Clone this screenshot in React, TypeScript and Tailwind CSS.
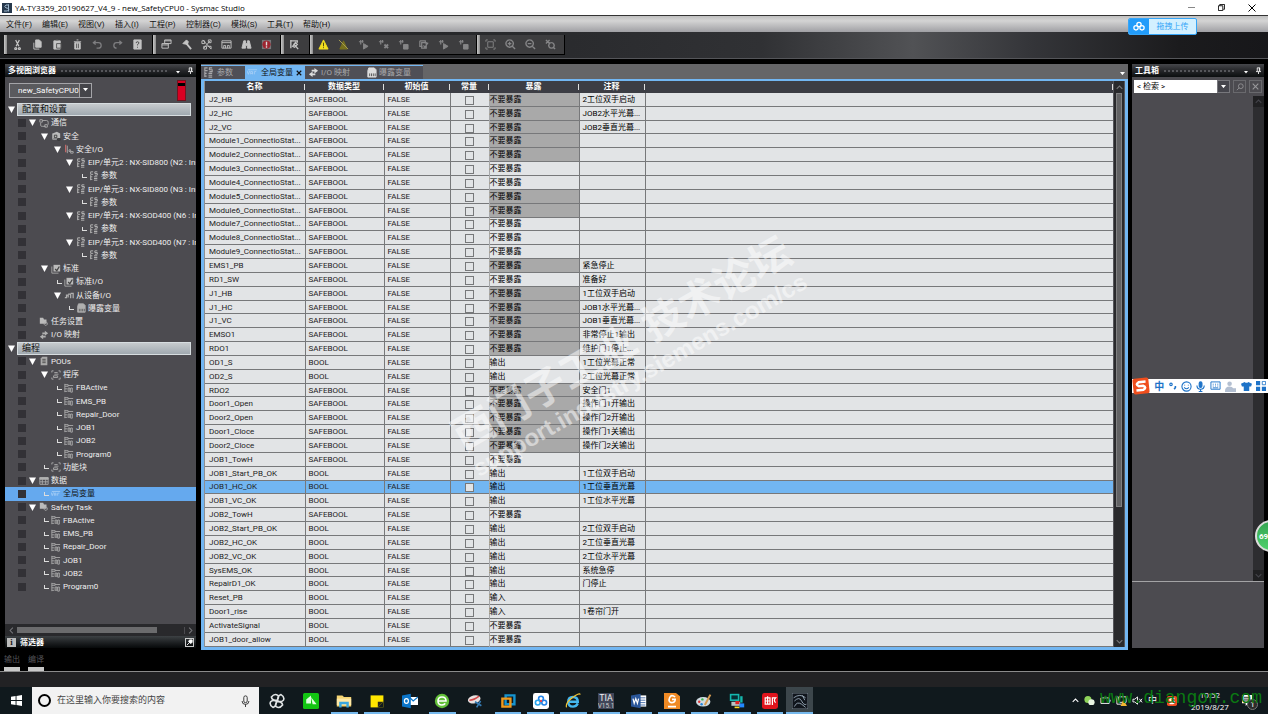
import { useState } from 'react';
import type { ReactNode } from 'react';

interface TreeNode {
  level: number;
  label: string;
  icon?: string;
  open?: boolean;
}

interface Variable {
  name: string;
  type: string;
  expose: string;
  shaded?: boolean;
  comment?: string;
}

const tree: TreeNode[] = [
  { level: 0, label: '配置和设置', open: true },
  { level: 1, label: '通信', icon: 'net', open: true },
  { level: 2, label: '安全', icon: 'safety', open: true },
  { level: 3, label: '安全I/O', icon: 'safeio', open: true },
  { level: 4, label: 'EIP/单元2 : NX-SID800 (N2 : Instance0)', icon: 'param', open: true },
  { level: 5, label: '参数', icon: 'param' },
  { level: 4, label: 'EIP/单元3 : NX-SID800 (N3 : Instance0)', icon: 'param', open: true },
  { level: 5, label: '参数', icon: 'param' },
  { level: 4, label: 'EIP/单元4 : NX-SOD400 (N6 : Instance0)', icon: 'param', open: true },
  { level: 5, label: '参数', icon: 'param' },
  { level: 4, label: 'EIP/单元5 : NX-SOD400 (N7 : Instance0)', icon: 'param', open: true },
  { level: 5, label: '参数', icon: 'param' },
  { level: 2, label: '标准', icon: 'standard', open: true },
  { level: 3, label: '标准I/O', icon: 'standard' },
  { level: 3, label: '从设备I/O', icon: 'slave', open: true },
  { level: 4, label: '曝露变量', icon: 'exposed' },
  { level: 1, label: '任务设置', icon: 'task' },
  { level: 1, label: 'I/O 映射', icon: 'map' },
  { level: 0, label: '编程', open: true },
  { level: 1, label: 'POUs', icon: 'pou', open: true },
  { level: 2, label: '程序', icon: 'program', open: true },
  { level: 3, label: 'FBActive', icon: 'ladder' },
  { level: 3, label: 'EMS_PB', icon: 'ladder' },
  { level: 3, label: 'Repair_Door', icon: 'ladder' },
  { level: 3, label: 'JOB1', icon: 'ladder' },
  { level: 3, label: 'JOB2', icon: 'ladder' },
  { level: 3, label: 'Program0', icon: 'ladder' },
  { level: 2, label: '功能块', icon: 'program' },
  { level: 1, label: '数据', icon: 'data', open: true },
  { level: 2, label: '全局变量', icon: 'var' },
  { level: 1, label: 'Safety Task', icon: 'task', open: true },
  { level: 2, label: 'FBActive', icon: 'ladder' },
  { level: 2, label: 'EMS_PB', icon: 'ladder' },
  { level: 2, label: 'Repair_Door', icon: 'ladder' },
  { level: 2, label: 'JOB1', icon: 'ladder' },
  { level: 2, label: 'JOB2', icon: 'ladder' },
  { level: 2, label: 'Program0', icon: 'ladder' },
];

const indent = ['', 'pl-[2px]', 'pl-[14px]', 'pl-[27px]', 'pl-[39px]', 'pl-[52px]'];

const variables: Variable[] = [
  { name: 'J2_HB', type: 'SAFEBOOL', expose: '不要暴露', shaded: true, comment: '2工位双手启动' },
  { name: 'J2_HC', type: 'SAFEBOOL', expose: '不要暴露', shaded: true, comment: 'JOB2水平光幕...' },
  { name: 'J2_VC', type: 'SAFEBOOL', expose: '不要暴露', shaded: true, comment: 'JOB2垂直光幕...' },
  { name: 'Module1_ConnectioStat...', type: 'SAFEBOOL', expose: '不要暴露', shaded: true },
  { name: 'Module2_ConnectioStat...', type: 'SAFEBOOL', expose: '不要暴露', shaded: true },
  { name: 'Module3_ConnectioStat...', type: 'SAFEBOOL', expose: '不要暴露' },
  { name: 'Module4_ConnectioStat...', type: 'SAFEBOOL', expose: '不要暴露' },
  { name: 'Module5_ConnectioStat...', type: 'SAFEBOOL', expose: '不要暴露', shaded: true },
  { name: 'Module6_ConnectioStat...', type: 'SAFEBOOL', expose: '不要暴露', shaded: true },
  { name: 'Module7_ConnectioStat...', type: 'SAFEBOOL', expose: '不要暴露' },
  { name: 'Module8_ConnectioStat...', type: 'SAFEBOOL', expose: '不要暴露' },
  { name: 'Module9_ConnectioStat...', type: 'SAFEBOOL', expose: '不要暴露' },
  { name: 'EMS1_PB', type: 'SAFEBOOL', expose: '不要暴露', shaded: true, comment: '紧急停止' },
  { name: 'RD1_SW', type: 'SAFEBOOL', expose: '不要暴露', comment: '准备好' },
  { name: 'J1_HB', type: 'SAFEBOOL', expose: '不要暴露', shaded: true, comment: '1工位双手启动' },
  { name: 'J1_HC', type: 'SAFEBOOL', expose: '不要暴露', shaded: true, comment: 'JOB1水平光幕...' },
  { name: 'J1_VC', type: 'SAFEBOOL', expose: '不要暴露', shaded: true, comment: 'JOB1垂直光幕...' },
  { name: 'EMSO1', type: 'SAFEBOOL', expose: '不要暴露', shaded: true, comment: '非常停止1输出' },
  { name: 'RDO1', type: 'SAFEBOOL', expose: '不要暴露', shaded: true, comment: '维护门1停止...' },
  { name: 'OD1_S', type: 'BOOL', expose: '输出', comment: '1工位光幕正常' },
  { name: 'OD2_S', type: 'BOOL', expose: '输出', comment: '2工位光幕正常' },
  { name: 'RDO2', type: 'SAFEBOOL', expose: '不要暴露', shaded: true, comment: '安全门1' },
  { name: 'Door1_Open', type: 'SAFEBOOL', expose: '不要暴露', shaded: true, comment: '操作门1开输出' },
  { name: 'Door2_Open', type: 'SAFEBOOL', expose: '不要暴露', shaded: true, comment: '操作门2开输出' },
  { name: 'Door1_Cloce', type: 'SAFEBOOL', expose: '不要暴露', shaded: true, comment: '操作门1关输出' },
  { name: 'Door2_Cloce', type: 'SAFEBOOL', expose: '不要暴露', shaded: true, comment: '操作门2关输出' },
  { name: 'JOB1_TowH', type: 'SAFEBOOL', expose: '不要暴露' },
  { name: 'JOB1_Start_PB_OK', type: 'BOOL', expose: '输出', comment: '1工位双手启动' },
  { name: 'JOB1_HC_OK', type: 'BOOL', expose: '输出', comment: '1工位垂直光幕' },
  { name: 'JOB1_VC_OK', type: 'BOOL', expose: '输出', comment: '1工位水平光幕' },
  { name: 'JOB2_TowH', type: 'SAFEBOOL', expose: '不要暴露' },
  { name: 'JOB2_Start_PB_OK', type: 'BOOL', expose: '输出', comment: '2工位双手启动' },
  { name: 'JOB2_HC_OK', type: 'BOOL', expose: '输出', comment: '2工位垂直光幕' },
  { name: 'JOB2_VC_OK', type: 'BOOL', expose: '输出', comment: '2工位水平光幕' },
  { name: 'SysEMS_OK', type: 'BOOL', expose: '输出', comment: '系统急停' },
  { name: 'RepairD1_OK', type: 'BOOL', expose: '输出', comment: '门停止' },
  { name: 'Reset_PB', type: 'BOOL', expose: '输入' },
  { name: 'Door1_rise', type: 'BOOL', expose: '输入', comment: '1卷帘门开' },
  { name: 'ActivateSignal', type: 'BOOL', expose: '不要暴露' },
  { name: 'JOB1_door_allow', type: 'BOOL', expose: '不要暴露' },
];

const columns = [
  { title: '名称', width: 'w-[100px]' },
  { title: '数据类型', width: 'w-[79px]' },
  { title: '初始值', width: 'w-[66px]' },
  { title: '常量', width: 'w-[39px]' },
  { title: '暴露', width: 'w-[90px]' },
  { title: '注释', width: 'w-[66px]' },
  { title: '', width: '' },
];

const menus = [
  { label: '文件(F)', width: 'w-[36px]' },
  { label: '编辑(E)', width: 'w-[36px]' },
  { label: '视图(V)', width: 'w-[37px]' },
  { label: '插入(I)', width: 'w-[34px]' },
  { label: '工程(P)', width: 'w-[37px]' },
  { label: '控制器(C)', width: 'w-[45px]' },
  { label: '模拟(S)', width: 'w-[36px]' },
  { label: '工具(T)', width: 'w-[36px]' },
  { label: '帮助(H)', width: 'w-[36px]' },
];

// All glyphs share a 12x12 grid and take the stroke colour of the parent.
const glyphs: Record<string, ReactNode> = {
  cut: <path d="M4 1l3.500 7M8 1L4.500 8M4 9.500a1 1 0 1 0 .1 0M8 9.500a1 1 0 1 0 .1 0" strokeWidth="1.400" />,
  copy: <><path d="M4 1h4l2 2v6H4z" fill="currentColor" /><path d="M2 4v7h6" /></>,
  paste: <><path d="M2 2h7v9H2z" fill="currentColor" /><path d="M4 1h3M5 5h5v5H5z" stroke="#555" /></>,
  trash: <><path d="M3 4h6v7H3z" fill="currentColor" /><path d="M2 3h8M5 1h2" /><path d="M5 5v5M7 5v5" stroke="#555" /></>,
  undo: <path d="M4 2L1.500 4 4 6M2 4h5q3 0 3 3t-3 3H5" strokeWidth="1.400" />,
  redo: <path d="M8 2l2.500 2L8 6M10 4H5Q2 4 2 7t3 3" strokeWidth="1.400" />,
  help: <><path d="M2 1h8v10H2z" fill="currentColor" /><path d="M4.500 4.500q0-1.500 1.500-1.500t1.500 1.300q0 1-1.500 1.700v1M6 8.500v1" stroke="#444" /></>,
  windows: <path d="M4 1h7v4H4zM4 2h7M1 5h7v5H1zM1 6.500h7" />,
  hammer: <><path d="M2 5l4-4 2 2-1 3z" fill="currentColor" /><path d="M6 5l5 6" strokeWidth="2" /></>,
  network: <path d="M1 2h3v3H1zM8 1h3v3H8zM3 8h3v3H3zM2 1l9 10M10 2L3 10M7 8h4v3" />,
  monitor: <path d="M1 2h10v8H1zM1 4h10M3 10V7h2v3M7 10V7h2v3" />,
  binoculars: <path d="M3 2h2v3h2V2h2l2 8H7V7H5v3H1z" fill="currentColor" />,
  stop: <><path d="M1 1h10v10H1z" fill="#77777a" stroke="none" /><circle cx="6" cy="6" r="4.500" fill="#9d2530" stroke="none" /><path d="M6 3v4M6 8v1.500" stroke="#ddd" strokeWidth="1.500" /></>,
  tool: <path d="M2 1v9M2 2h7v2M5 5l5 6M4 8l3-4 2 2-3 3z" strokeWidth="1.500" />,
  warn: <><path d="M6 1l5 10H1z" fill="#f3df20" stroke="#f3df20" /><path d="M6 4v4M6 9v1" stroke="#443f10" /></>,
  nowarn: <><path d="M6 2l4 9H2z" fill="#77701f" stroke="#77701f" /><path d="M1 1l10 10" stroke="#aaa255" /></>,
  play: <><path d="M1 3h5M3 1v5M5 1v3" strokeWidth="1.300" /><path d="M6 5l5 3-5 3z" fill="currentColor" /></>,
  cross: <><path d="M1 3h5M3 1v5M5 1v3" strokeWidth="1.300" /><path d="M7 6l4 4M11 6l-4 4" strokeWidth="2" /></>,
  block: <><path d="M1 3h5M3 1v5M5 1v3" strokeWidth="1.300" /><path d="M6 6h5v5H6z" fill="currentColor" /></>,
  check: <path d="M2 2h6v3M2 2v6h3M4 4h5v6H4zM6 7l1.500 2L11 4" strokeWidth="1.300" />,
  frame: <path d="M3 3h6v6H3zM1 3V1h2M9 1h2v2M11 9v2H9M3 11H1V9" />,
  zoomin: <path d="M5 1a4 4 0 1 0 .1 0M8 8l3 3M3 5h4M5 3v4" strokeWidth="1.500" />,
  zoomout: <path d="M5 1a4 4 0 1 0 .1 0M8 8l3 3M3 5h4" strokeWidth="1.500" />,
  zoomfit: <path d="M1 1l4 4M5 1L1 5M7 4a3 3 0 1 0 .1 0M9 9l2 2" strokeWidth="1.500" />,
  param: <path d="M5 1H2v3h3M10 1H7v2h3v2H7M2 5v6M2 7h2M2 10h2M6 7h4M6 9h4M6 11h4" strokeWidth="1.200" />,
  net: <path d="M1 2h3v3H1zM4 3h5q2 0 2 2v3M2 6v3q0 1 2 1h4M7 8h3v3H7z" />,
  safety: <><path d="M2 3l5-2 4 2v6H2z" fill="#bbb" stroke="none" /><path d="M4 5h3v3H4zM8 9h3v2H8z" stroke="#333" /><path d="M2 3v7h5" /></>,
  standard: <><path d="M3 1h8v8H3z" fill="#bbb" stroke="none" /><path d="M1 3v8h8" /><path d="M5 6l2 2 3-5" stroke="#444" strokeWidth="1.500" /></>,
  safeio: <><path d="M2 1v9" stroke="#c46a6a" strokeWidth="1.500" /><path d="M4 2v9M6 7h2v2H6zM8 9h3v2H8z" /></>,
  slave: <path d="M1 9h2V6h2v3M5 5h3v5M8 4h3v6" strokeWidth="1.500" />,
  exposed: <><path d="M3 1h6l2 2v8H2V4z" fill="currentColor" /><path d="M4 10V7M6 10V7M8 10V7M10 10V7" stroke="#555" /></>,
  task: <><path d="M1 1h4l1 2h3v5H1z" fill="#bbb" stroke="none" /><path d="M8 6a2 2 0 1 0 .1 0" /></>,
  map: <><path d="M7 1l4 3-4 3V5H4V3h3z" fill="currentColor" stroke="none" /><path d="M5 5L1 8l4 3V9h3V7H5z" fill="currentColor" stroke="none" /></>,
  pou: <><path d="M4 1h6v10H2V3z" fill="#aaa" stroke="none" /><path d="M4 4h4M4 6h4M4 8h4" stroke="#444" /></>,
  program: <path d="M1 3V1h2M9 1h2v2M11 9v2H9M3 11H1V9M4 3h4M4 5h5M3 7h5v2H3z" />,
  ladder: <path d="M1 1v10M1 2h4v2H1M5 3h6M1 7h3M5 6h2v4H5zM8 6h2v5H8zM1 10h3" />,
  data: <><path d="M1 2h10v8H1z" /><path d="M1 2h10v2H1z" fill="currentColor" /><path d="M1 7h10M4 4v6M8 4v6" /></>,
  var: <path d="M0 4l1.500 4L3 4M4 8V5h2v3M4 7h2M8 8V5h2M1 3h10" stroke="#a3cdf5" />,
};

function Glyph({ name, className = 'size-[11px]' }: { name: string; className?: string }) {
  return (
    <svg viewBox="0 0 12 12" className={`shrink-0 ${className}`} fill="none" stroke="currentColor" strokeWidth="1" aria-hidden="true">
      {glyphs[name]}
    </svg>
  );
}

function Caret({ className = 'w-[5px]' }: { className?: string }) {
  return (
    <svg viewBox="0 0 8 5" className={`shrink-0 ${className}`} fill="currentColor" aria-hidden="true">
      <path d="M0 0h8L4 5z" />
    </svg>
  );
}

function TreeArrow() {
  return (
    <svg viewBox="0 0 7 7" className="size-[7px] shrink-0 text-white" fill="currentColor" aria-hidden="true">
      <path d="M0 .5h7L3.500 7z" />
    </svg>
  );
}

function Chevron({ path }: { path: string }) {
  return (
    <svg viewBox="0 0 10 10" className="size-[7px]" fill="none" stroke="currentColor" strokeWidth="1.500" aria-hidden="true">
      <path d={path} />
    </svg>
  );
}

const toolGroups = [
  { width: 'w-[149px]', dim: false, icons: ['cut', 'copy', 'paste', 'trash', 'undo', 'redo', 'help'] },
  { width: 'w-[128px]', dim: false, icons: ['windows', 'hammer', 'network', 'monitor', 'binoculars', 'stop'] },
  { width: 'w-[29px]', dim: false, icons: ['tool'] },
  { width: 'w-[167px]', dim: true, icons: ['warn', 'nowarn', 'play', 'cross', 'block', 'check', 'play', 'block'] },
  { width: 'w-[88px]', dim: true, icons: ['frame', 'zoomin', 'zoomout', 'zoomfit'] },
];

function Toolbar() {
  return (
    <div className="flex h-[27px] items-center border-b border-[#55565a] bg-[linear-gradient(90deg,#1b1c1e_0%,#2a2b2e_45%,#303134_60%,#515255_72%,#35363a_81%,#1b1b1d_93%,#17171a_100%)] pl-1">
      {toolGroups.map((group, i) => (
        <div key={i} className={`flex h-[20px] border-r border-b border-black bg-[#3d3d3f] ${group.width}`}>
          <span className="w-[3px] bg-gradient-to-r from-[#c9c9c9] to-[#8b8b8b]" />
          {group.icons.map((icon, j) => (
            <button
              key={j}
              aria-label={icon}
              className={`flex w-5 items-center justify-center ${group.dim ? 'text-[#858587]' : icon === 'undo' || icon === 'redo' ? 'text-[#7e7e80]' : 'text-[#c4c4c4]'}`}
            >
              <Glyph name={icon} />
            </button>
          ))}
        </div>
      ))}
    </div>
  );
}

function PanelHeader({ title }: { title: string }) {
  return (
    <div className="flex h-[13px] shrink-0 items-center gap-1 bg-gradient-to-b from-[#46474b] via-[#26272a] to-[#0b0e0f] px-[3px] text-white">
      <h2 className="font-bold">{title}</h2>
      <span className="h-[4px] flex-1 bg-[radial-gradient(#55565a_1px,transparent_1px)] bg-[size:4px_4px]" />
      <button aria-label="菜单" className="mt-1 flex w-3 justify-center"><Caret className="w-[4px]" /></button>
      <button aria-label="固定">
        <svg viewBox="0 0 6 9" className="w-[5px]" fill="none" stroke="currentColor" aria-hidden="true">
          <path d="M1.500 5V1h3v4M0 5.500h6M3 6v3M4 1v4" />
        </svg>
      </button>
    </div>
  );
}

function Explorer() {
  const [selected, setSelected] = useState(29);

  return (
    <aside className="mb-[2px] flex w-[191px] shrink-0 flex-col bg-[#4c4b50]">
      <PanelHeader title="多视图浏览器" />
      <div className="flex h-[26px] shrink-0 items-center justify-between pr-[10px] pl-1">
        <div className="flex h-[15px] w-[83px] items-stretch border border-[#a4a4a8] bg-[#5a5a5e] text-white">
          <select aria-label="控制器" className="min-w-0 flex-1 appearance-none pl-[8px] text-[8px] outline-none">
            <option>new_SafetyCPU0</option>
          </select>
          <span className="pointer-events-none flex w-[12px] items-center justify-center border-l border-[#a4a4a8] bg-[#45454a]">
            <Caret />
          </span>
        </div>
        <span className="flex h-[21px] w-[9px] flex-col border border-[#6f1520] bg-[#d70022] pt-[2px]">
          <span className="h-[3px] bg-black" />
        </span>
      </div>
      <ul className="flex flex-1 flex-col overflow-hidden pb-[31px] text-[#eeeeee]">
        {tree.map((node, i) => {
          if (node.level === 0) {
            return (
              <li key={i} className="flex min-h-0 flex-1 items-center gap-[2px] pr-[5px] pl-[3px]">
                <TreeArrow />
                <button className="flex h-[13px] flex-1 items-center border border-[#d7dde0] bg-gradient-to-b from-[#c6cacd] to-[#a0a9b0] pl-1 text-[9px] text-[#111111]">
                  {node.label}
                </button>
              </li>
            );
          }
          return (
            <li key={i} className={`flex min-h-0 flex-1 items-center pl-[13px] ${selected === i ? 'bg-[#65a9ee] text-[#111111]' : ''}`}>
              <span className="size-[8px] shrink-0 bg-[#323136]" />
              <button onClick={() => setSelected(i)} className={`flex min-w-0 flex-1 items-center whitespace-nowrap ${indent[node.level]}`}>
                <span className="flex w-[9px] shrink-0 justify-center">
                  {node.open ? (
                    <TreeArrow />
                  ) : (
                    node.level > 1 && <span className="ml-[3px] h-[4px] w-[5px] border-b border-l border-[#dddddd]" />
                  )}
                </span>
                <span className="mr-[2px] ml-[2px] text-[#b0b0b0]"><Glyph name={node.icon ?? 'param'} className="size-[10px]" /></span>
                {node.label}
              </button>
            </li>
          );
        })}
      </ul>
      <div className="flex h-[12px] shrink-0 items-center bg-[#29292c] text-[#77777a]">
        <button aria-label="向左" className="flex w-[12px] justify-center"><Chevron path="M7 1L3 5l4 4" /></button>
        <span className="flex-1 pr-[27px]"><span className="block h-[6px] bg-[#6b6b6d]" /></span>
        <button aria-label="向右" className="flex w-[12px] justify-center border-l border-[#4c4b50]"><Chevron path="M3 1l4 4-4 4" /></button>
      </div>
      <div className="flex h-[12px] shrink-0 items-center bg-gradient-to-b from-[#3d4144] to-[#07090a] px-[2px] font-bold text-white">
        <span className="mr-1 flex h-[9px] w-[9px] items-center justify-center bg-[#bcbcbc] font-serif text-[#111111]">i</span>
        筛选器
        <button aria-label="展开筛选器" className="ml-auto flex size-[9px] items-center justify-center border border-[#cccccc]">
          <svg viewBox="0 0 8 8" className="size-[7px]" fill="currentColor" stroke="currentColor" aria-hidden="true">
            <path d="M4 1h3v3L5 5 3 3z" /><path d="M1 7l3-3" />
          </svg>
        </button>
      </div>
    </aside>
  );
}

function Editor() {
  const [active, setActive] = useState(28);

  return (
    <main className="flex min-w-0 flex-1 flex-col bg-[#656567] pt-px">
      <div className="flex h-[14px] shrink-0 items-stretch text-[#a9a9ab]">
        <div className="flex border-t border-[#72b6f2] bg-[#4f4f56]">
          <button className="flex w-[44px] items-center gap-[3px] pl-[2px]"><Glyph name="param" />参数</button>
          <div className="flex w-[60px] items-center bg-[#72b6f2] text-[#111111]">
            <button className="flex items-center gap-[3px] pl-[2px]"><Glyph name="var" />全局变量</button>
            <button aria-label="关闭" className="ml-[3px]">
              <svg viewBox="0 0 8 8" className="size-[6px]" stroke="currentColor" strokeWidth="1.500" aria-hidden="true"><path d="M1 1l6 6M7 1L1 7" /></svg>
            </button>
          </div>
          <button className="flex w-[59px] items-center gap-[2px] pl-[3px]"><span className="text-[#dddddd]"><Glyph name="map" /></span>I/O 映射</button>
          <button className="flex w-[59px] items-center gap-[2px] pl-[2px]"><span className="text-[#dddddd]"><Glyph name="exposed" /></span>曝露变量</button>
        </div>
        <button aria-label="标签列表" className="mt-auto mr-[3px] mb-[4px] ml-auto text-white"><Caret /></button>
      </div>
      <div className="flex min-h-0 flex-1 border-[3px] border-t-2 border-[#72b6f2] bg-[#8f9092] pl-px">
        <table className="h-full flex-1 table-fixed border-collapse bg-[#e2e4e6] text-[#222222]">
          <thead>
            <tr className="h-[12px] bg-[#3c3d44] leading-[10px] text-white">
              {columns.map((col, i) => (
                <th key={i} className={`p-0 font-bold ${col.width}`}>
                  <span className="flex items-center">
                    <span className="flex-1 text-center">{col.title}</span>
                    <span className="h-[6px] w-px bg-[#dddddd]" />
                  </span>
                </th>
              ))}
            </tr>
          </thead>
          <tbody>
            {variables.map((row, i) => (
              <tr
                key={row.name}
                onClick={() => setActive(i)}
                className={`border-b border-[#77787a] ${active === i ? 'bg-[#72b6f2]' : ''}`}
              >
                <td className="border-r border-[#77787a] p-0 pl-1 whitespace-nowrap">{row.name}</td>
                <td className="border-r border-[#77787a] p-0 pl-[3px]">{row.type}</td>
                <td className="border-r border-[#77787a] p-0 pl-[3px]">FALSE</td>
                <td className="border-r border-[#a7a8aa] p-0">
                  <input type="checkbox" aria-label={`${row.name} 常量`} className="mx-auto mt-[2px] block size-[9px] appearance-none border border-[#77787a] bg-[#e2e4e6]" />
                </td>
                <td className={`border-r border-[#77787a] p-0 text-[#000000] ${row.shaded ? 'bg-[#a9a9a9]' : ''}`}>{row.expose}</td>
                <td className="border-r border-[#77787a] p-0 pl-[3px] whitespace-nowrap text-[#000000]">{row.comment}</td>
                <td className="p-0" />
              </tr>
            ))}
          </tbody>
        </table>
        <div className="flex w-[12px] shrink-0 flex-col items-center border-x border-[#55555a] bg-[#29292c] text-[#77777a]">
          <button aria-label="向上" className="flex h-[12px] items-center"><Chevron path="M1 7l4-4 4 4" /></button>
          <span className="w-[6px] flex-[412] border border-[#808082] bg-[#626264]" />
          <span className="flex-[128]" />
          <button aria-label="向下" className="flex h-[12px] items-center"><Chevron path="M1 3l4 4 4-4" /></button>
        </div>
      </div>
    </main>
  );
}

function Toolbox() {
  return (
    <aside className="mb-[2px] flex w-[132px] shrink-0 flex-col bg-[#4c4b50]">
      <PanelHeader title="工具箱" />
      <div className="flex h-[19px] shrink-0 items-center gap-[3px] px-[2px] text-[#99999c]">
        <div className="flex h-[13px] flex-1">
          <input aria-label="检索" defaultValue="< 检索 >" className="w-full min-w-0 bg-white pl-[3px] text-[8px] text-black outline-none" />
          <button aria-label="检索历史" className="flex w-[13px] shrink-0 items-center justify-center border border-[#77777c] bg-[#45454c] text-white"><Caret /></button>
        </div>
        <button aria-label="搜索" className="flex h-[13px] w-[13px] items-center justify-center border border-[#69696d]">
          <svg viewBox="0 0 10 10" className="size-[8px]" fill="none" stroke="currentColor" aria-hidden="true"><circle cx="6" cy="4" r="3" /><path d="M4 6L1 9" /></svg>
        </button>
        <button aria-label="清除" className="flex h-[13px] w-[13px] items-center justify-center border border-[#69696d]">
          <Chevron path="M1 1l8 8M9 1L1 9" />
        </button>
      </div>
      <div className="flex flex-1 justify-end border-b border-[#a3a3a5]">
        <div className="flex w-[11px] flex-col items-center justify-between bg-[#2d2d30] text-[#44444a]">
          <button aria-label="向上" className="flex h-[11px] w-full items-center justify-center bg-[#202022]"><Chevron path="M1 7l4-4 4 4" /></button>
          <button aria-label="向下" className="flex h-[11px] w-full items-center justify-center bg-[#202022]"><Chevron path="M1 3l4 4 4-4" /></button>
        </div>
      </div>
      <div className="h-[66px] shrink-0" />
    </aside>
  );
}

// Taskbar application icons, 20x20 grid.
const apps: { name: string; running: boolean; art: ReactNode }[] = [
  { name: '视频', running: false, art: <><rect x="0" y="0" width="20" height="20" rx="2" fill="#12c512" /><path d="M4 13V8l6-5v10zM10 5l7 9h-5z" fill="#dfffdf" /></> },
  { name: '文件资源管理器', running: true, art: <><path d="M1 3h7l2 2h9v12H1z" fill="#f6d573" /><path d="M1 7h18v8H1z" fill="#ffe9a6" /><path d="M4 18v-7h12v7h-3v-4H7v4z" fill="#39a7df" /></> },
  { name: '便笺', running: true, art: <><path d="M2 3h16v15H2z" fill="#ffe600" /><path d="M11 11h7l-7 7z" fill="#26261c" /><path d="M18 11v7h-7z" fill="#10191d" /></> },
  { name: 'Outlook', running: false, art: <><path d="M9 5h11v10H9z" fill="#fff" /><path d="M9 5l5 5 6-5" stroke="#0b75c9" strokeWidth="1.500" fill="none" /><path d="M0 3l11-2v18L0 17z" fill="#0b75c9" /><ellipse cx="5.500" cy="10" rx="2.500" ry="3" fill="none" stroke="#fff" strokeWidth="1.500" /></> },
  { name: '360浏览器', running: true, art: <><circle cx="10" cy="10" r="9" fill="#62bf39" /><path d="M5 10h10q0-5-5-5t-5 5 5 5q3 0 4-2" fill="none" stroke="#fff" strokeWidth="2" /></> },
  { name: '截图工具', running: false, art: <><ellipse cx="9" cy="8" rx="8" ry="5" fill="#e8e0df" transform="rotate(-15 9 8)" /><path d="M3 9q6 0 12-5" stroke="#d34a4a" strokeWidth="2" fill="none" /><path d="M10 11l8 5M17 10l-5 8" stroke="#367ab2" strokeWidth="2" /></> },
  { name: '虚拟机', running: true, art: <g fill="none" strokeWidth="3"><path d="M7 3h11v11H7z" stroke="#1694cf" /><path d="M3 7h10v10H3z" stroke="#f19a1c" /></g> },
  { name: '网盘', running: true, art: <><rect x="0" y="0" width="20" height="20" rx="3" fill="#fff" /><g fill="none" strokeWidth="2"><circle cx="10" cy="7" r="3" stroke="#2384e8" /><circle cx="6" cy="12" r="3" stroke="#2aa6ee" /><circle cx="14" cy="12" r="3" stroke="#2384e8" /></g><circle cx="10" cy="10" r="1.500" fill="#e44a5b" /></> },
  { name: 'Internet Explorer', running: true, art: <><path d="M5 11h11q0-6-6-6t-6 6 6 6q4 0 6-4" fill="none" stroke="#45b7ee" strokeWidth="3" /><path d="M2 18Q0 13 9 6t10-4" fill="none" stroke="#f4c431" strokeWidth="1.500" /></> },
  { name: 'TIA', running: true, art: <><rect x="0" y="0" width="20" height="20" fill="#404659" /><text x="10" y="10" textAnchor="middle" fontSize="11" fill="#eee">TIA</text><text x="10" y="19" textAnchor="middle" fontSize="8" fill="#ccc">V15.1</text></> },
  { name: 'Word', running: true, art: <><path d="M10 3h9v14h-9z" fill="#fff" /><path d="M11 6h7M11 9h7M11 12h7M11 15h7" stroke="#2a5699" /><path d="M0 3l12-2v18L0 17z" fill="#2a5699" /><path d="M2.500 7L4 13l2-6 2 6 1.500-6" stroke="#fff" fill="none" strokeWidth="1.500" /></> },
  { name: 'PDF', running: true, art: <><path d="M0 0h15l5 4v16H0z" fill="#f08a24" /><path d="M14 5q-5-4-7 1t2 6q5 0 5-4h-4M5 17h10" fill="none" stroke="#fff" strokeWidth="2" /></> },
  { name: '画图', running: true, art: <><ellipse cx="9" cy="11" rx="9" ry="6" fill="#cfdbe2" /><circle cx="4" cy="11" r="1.500" fill="#d33" /><circle cx="8" cy="8" r="1.500" fill="#39b54a" /><circle cx="7" cy="14" r="1.500" fill="#2684d9" /><path d="M11 15l7-13" stroke="#d79b52" strokeWidth="2.500" /></> },
  { name: '远程', running: true, art: <><path d="M1 1h12v9H1z" fill="#14b7ae" /><path d="M3 3h8v5H3z" fill="#062d33" /><path d="M3 11h11v5H3z" fill="#b7c4c6" /><path d="M14 4h3v8h-3z" fill="#14b7ae" /><path d="M8 10h5v4H8z" fill="#d22" /><path d="M13 13h6v5h-6z" fill="#28f" /><path d="M7 17h6v2H7z" fill="#fd2" /></> },
  { name: '邮编', running: true, art: <><rect x="0" y="0" width="20" height="20" rx="3" fill="#e1141d" /><path d="M4 6h6v8H4zM7 4v10M4 10h6M13 15V6h4q-3 3 0 6" fill="none" stroke="#fff" strokeWidth="1.500" /></> },
];

function Taskbar() {
  return (
    <footer className="flex h-[27px] items-stretch bg-[#10191d] text-white">
      <button aria-label="开始" className="flex w-[32px] items-center justify-center">
        <svg viewBox="0 0 12 12" className="size-[11px]" fill="white" aria-hidden="true">
          <path d="M0 2l5-1v4.500H0zM6 1l6-1v5.500H6zM0 6.500h5V11l-5-1zM6 6.500h6V12l-6-1z" />
        </svg>
      </button>
      <label className="flex w-[227px] items-center bg-[#f2f2f2] pr-[9px] pl-[6px] text-black">
        <span className="size-[13px] shrink-0 rounded-full border-2 border-black" />
        <input aria-label="搜索" placeholder="在这里输入你要搜索的内容" className="ml-[6px] min-w-0 flex-1 text-[9px] outline-none placeholder:text-[#444444]" />
        <svg viewBox="0 0 10 14" className="h-[12px] w-[9px]" fill="none" stroke="#222" aria-hidden="true">
          <rect x="3" y="1" width="4" height="8" rx="2" /><path d="M1 7q0 4 4 4t4-4M5 11v3" />
        </svg>
      </label>
      <button aria-label="浏览器" className="flex w-[36px] justify-center pt-[6px]">
        <svg viewBox="0 0 20 20" className="size-4" fill="none" stroke="#dfe3e4" strokeWidth="2" aria-hidden="true">
          <path d="M10 9Q4 10 3 5q4-5 8-2 2 3-1 6M11 10q-1-6 4-8 5 3 3 7-3 3-7 1M10 11q6-1 7 4-4 5-8 2-2-3 1-6M9 10q1 6-4 8-5-3-3-7 3-3 7-1" />
        </svg>
      </button>
      <div className="flex w-[518px]">
        {apps.map((app) => (
          <button key={app.name} aria-label={app.name} className="flex flex-1 flex-col items-center px-[3px] pt-[6px]">
            <svg viewBox="0 0 20 20" className="size-4 shrink-0" aria-hidden="true">{app.art}</svg>
            {app.running && <span className="mt-auto h-[2px] w-full bg-[#76b9ed]" />}
          </button>
        ))}
        <button aria-label="Sysmac Studio" className="flex flex-1 flex-col items-center bg-[#3c464b] pt-[6px]">
          <svg viewBox="0 0 20 20" className="size-4 shrink-0" aria-hidden="true">
            <rect width="20" height="20" fill="#10151c" stroke="#8996a4" />
            <path d="M2 6q8-6 15 0M3 10q6-6 9 0t6 4M3 17q3-7 9-3l5 4M13 3l3 6" fill="none" stroke="#a9bccb" />
          </svg>
          <span className="mt-auto h-[2px] w-full bg-[#76b9ed]" />
        </button>
      </div>
      <div className="ml-auto flex items-center gap-[5px] pr-[10px]">
        <Chevron path="M1 7l4-4 4 4" />
        <svg viewBox="0 0 14 12" className="w-[11px]" aria-hidden="true"><circle cx="5" cy="4.500" r="4.500" fill="#8ed45a" /><circle cx="9.500" cy="8" r="4" fill="#e9f5e3" /></svg>
        <svg viewBox="0 0 12 8" className="w-[11px]" fill="none" stroke="white" aria-hidden="true"><path d="M1 1h9v6H1zM11 3v2" /></svg>
        <svg viewBox="0 0 12 12" className="w-[11px]" fill="none" stroke="white" aria-hidden="true"><path d="M3 2h8v6H3zM1 1v9h5" /><path d="M8 5l4 7H5z" fill="#f2b632" stroke="none" /></svg>
        <svg viewBox="0 0 12 10" className="w-[11px]" fill="none" stroke="white" aria-hidden="true"><path d="M1 3.500h2l3-2.500v8L3 6.500H1zM8 3l3 4M11 3L8 7" /></svg>
        <span className="text-[9px]">中</span>
        <svg viewBox="0 0 12 12" className="ml-[5px] w-[10px]" aria-hidden="true"><rect width="12" height="12" rx="2" fill="#ee4b20" /><path d="M9 3H5Q2 4.500 5 6h2q3 1.500 0 3H3" fill="none" stroke="white" strokeWidth="2" /></svg>
        <div className="ml-[6px] w-[44px] text-center leading-[12px] [font-family:'Open_Sans',sans-serif]">
          <div>10:52</div>
          <div>2019/8/27</div>
        </div>
        <button aria-label="通知" className="relative ml-[3px] flex w-[18px] pl-[2px]">
          <svg viewBox="0 0 12 12" className="size-[11px]" fill="white" aria-hidden="true"><path d="M0 0h11v9H7l-3 3V9H0z" /><path d="M2 2.500h7M2 4.500h7M2 6.500h7" stroke="#222" /></svg>
          <span className="absolute top-[4px] right-0 flex size-[11px] items-center justify-center rounded-full border border-[#777777] bg-[#2b2b2b]">1</span>
        </button>
      </div>
    </footer>
  );
}

function InputMethodBar() {
  return (
    <div className="absolute top-[379px] right-0 flex h-[14px] w-[136px] items-center justify-between bg-white pr-[2px] text-[#1e73c8]">
      <svg viewBox="0 0 18 18" className="-my-1 size-[18px] -rotate-6" aria-hidden="true">
        <rect x="1" y="1" width="16" height="16" rx="2" fill="#f04e1d" />
        <path d="M14 5H7Q3 7 7 9h4q4 2 0 4H4" fill="none" stroke="white" strokeWidth="2.500" />
      </svg>
      <span className="text-[10px] font-bold">中</span>
      <svg viewBox="0 0 10 10" className="size-[8px]" fill="none" stroke="currentColor" strokeWidth="1.500" aria-hidden="true"><circle cx="2.500" cy="3" r="1.500" /><path d="M8 5v2L6.500 9" strokeWidth="2" /></svg>
      <svg viewBox="0 0 12 12" className="size-[11px]" fill="none" stroke="currentColor" strokeWidth="1.200" aria-hidden="true"><circle cx="6" cy="6" r="5" /><path d="M4 4v1M8 4v1M3.500 7q2.500 3 5 0" /></svg>
      <svg viewBox="0 0 10 12" className="h-[11px]" fill="none" stroke="currentColor" strokeWidth="1.200" aria-hidden="true"><rect x="3.500" y="1" width="3" height="6" rx="1.500" fill="currentColor" /><path d="M1 5q0 4 4 4t4-4M5 9v3M3 11.500h4" /></svg>
      <svg viewBox="0 0 12 10" className="w-[11px]" fill="none" stroke="currentColor" aria-hidden="true"><path d="M1 1h10v8H1zM3 3.500h1M5.500 3.500h1M8 3.500h1M3 5.500h1M5.500 5.500h1M8 5.500h1M3 7.500h6" /></svg>
      <svg viewBox="0 0 12 12" className="size-[11px]" fill="#b3bfd1" aria-hidden="true"><circle cx="5" cy="3" r="2.500" /><path d="M0 11q0-5 5-5 3 0 4 2h3v4H0z" /></svg>
      <svg viewBox="0 0 12 12" className="size-[11px]" fill="currentColor" aria-hidden="true"><path d="M4 1q2 2 4 0l4 2-1 3H9v5H3V6H1L0 3z" /></svg>
      <svg viewBox="0 0 12 12" className="size-[10px]" fill="currentColor" aria-hidden="true"><path d="M0 0h5v5H0zM0 7h5v5H0zM7 7h5v5H7z" /><path d="M7.500.5h4v4h-4z" fill="none" stroke="currentColor" /></svg>
    </div>
  );
}

export default function App() {
  return (
    <div
      lang="zh-CN"
      className="relative flex h-screen flex-col overflow-hidden bg-black text-[8px] leading-[11px] [font-family:Roboto,'Noto_Sans_CJK_SC',sans-serif]"
    >
      <header className="flex h-[15px] shrink-0 items-center bg-white pl-[2px] text-black">
        <svg viewBox="0 0 20 20" className="mr-[3px] size-[10px]" aria-hidden="true">
          <rect width="20" height="20" fill="#26384c" />
          <path d="M14 4H8Q3 7 8 10h3q5 3 0 6H4M13 3v14" fill="none" stroke="#9fb8ce" strokeWidth="2" />
        </svg>
        <h1 className="[font-family:'Open_Sans',sans-serif]">YA-TY3359_20190627_V4_9 - new_SafetyCPU0 - Sysmac Studio</h1>
        <div className="ml-auto flex">
          <button aria-label="最小化" className="flex w-[30px] items-center justify-center"><span className="h-px w-[7px] bg-[#888888]" /></button>
          <button aria-label="还原" className="flex w-[30px] items-center justify-center">
            <svg viewBox="0 0 8 8" className="size-[7px]" fill="none" stroke="black" aria-hidden="true"><path d="M.5 2h5v5.500h-5zM2 2V.5h5.500V6H6" /></svg>
          </button>
          <button aria-label="关闭窗口" className="flex w-[32px] items-center justify-center">
            <svg viewBox="0 0 8 8" className="size-[8px]" stroke="black" aria-hidden="true"><path d="M.5.5l7 7M7.500.5l-7 7" /></svg>
          </button>
        </div>
      </header>

      <nav className="flex h-[17px] shrink-0 items-center border-t border-[#333333] bg-gradient-to-b from-[#c0c0c0] via-[#d4d4d4] via-30% to-[#a0a0a4] pl-[6px] text-[#111111]">
        {menus.map((menu) => (
          <button key={menu.label} className={`text-left whitespace-nowrap ${menu.width}`}>{menu.label}</button>
        ))}
      </nav>
      <Toolbar />

      <div className="flex min-h-0 flex-1 pt-[5px] pr-1 pl-[5px]">
        <Explorer />
        <div className="w-[5px] shrink-0" />
        <Editor />
        <div className="w-1 shrink-0" />
        <Toolbox />
      </div>

      <div className="flex h-[22px] shrink-0 gap-2 border-b border-[#8b8b8b] pt-[4px] pl-1 text-[#55555a]">
        <button className="flex w-[16px] flex-col justify-between whitespace-nowrap">输出<span className="h-[4px] w-full bg-[#c9c9c9]" /></button>
        <button className="flex w-[16px] flex-col justify-between whitespace-nowrap">编译<span className="h-[4px] w-full bg-[#c9c9c9]" /></button>
      </div>
      <div className="h-[15px] shrink-0 bg-[#222224]" />
      <Taskbar />

      <button className="absolute top-[18px] right-[71px] flex h-[17px] w-[69px] items-center overflow-hidden rounded-[2px] border border-[#36a5f7] bg-[#d3f0ff] text-[#36a5f7]">
        <span className="flex h-full w-[20px] items-center justify-center bg-[#229cfa]">
          <svg viewBox="0 0 14 12" className="w-[12px]" fill="none" stroke="white" strokeWidth="1.500" aria-hidden="true">
            <circle cx="7" cy="4" r="2.500" /><circle cx="3.500" cy="8" r="2.500" /><circle cx="10.500" cy="8" r="2.500" />
          </svg>
        </span>
        <span className="flex-1 text-center">拖拽上传</span>
      </button>

      <InputMethodBar />

      <div className="absolute top-[520px] -right-[19px] flex size-[32px] items-center rounded-full border-2 border-[#dddddd] bg-gradient-to-b from-[#35a552] to-[#4fd06c] pl-[2px] font-bold text-white">69</div>

      <div className="pointer-events-none absolute top-[320px] left-[429px] w-[400px] -rotate-30 font-bold whitespace-nowrap text-white/50 [font-family:'Liberation_Sans','Noto_Sans_CJK_SC',sans-serif]">
        <div className="flex justify-center gap-[14px] text-[41px] leading-[44px]"><span>西门子工业</span><span>技术论坛</span></div>
        <div className="text-center text-[24px] leading-[28px]">support.industry.siemens.com/cs</div>
      </div>
      <div className="pointer-events-none absolute right-[6px] bottom-[6px] text-[18px] leading-[20px] text-[#0b7a12] [font-family:'Liberation_Mono',monospace]">www.diangon.com</div>
    </div>
  );
}
